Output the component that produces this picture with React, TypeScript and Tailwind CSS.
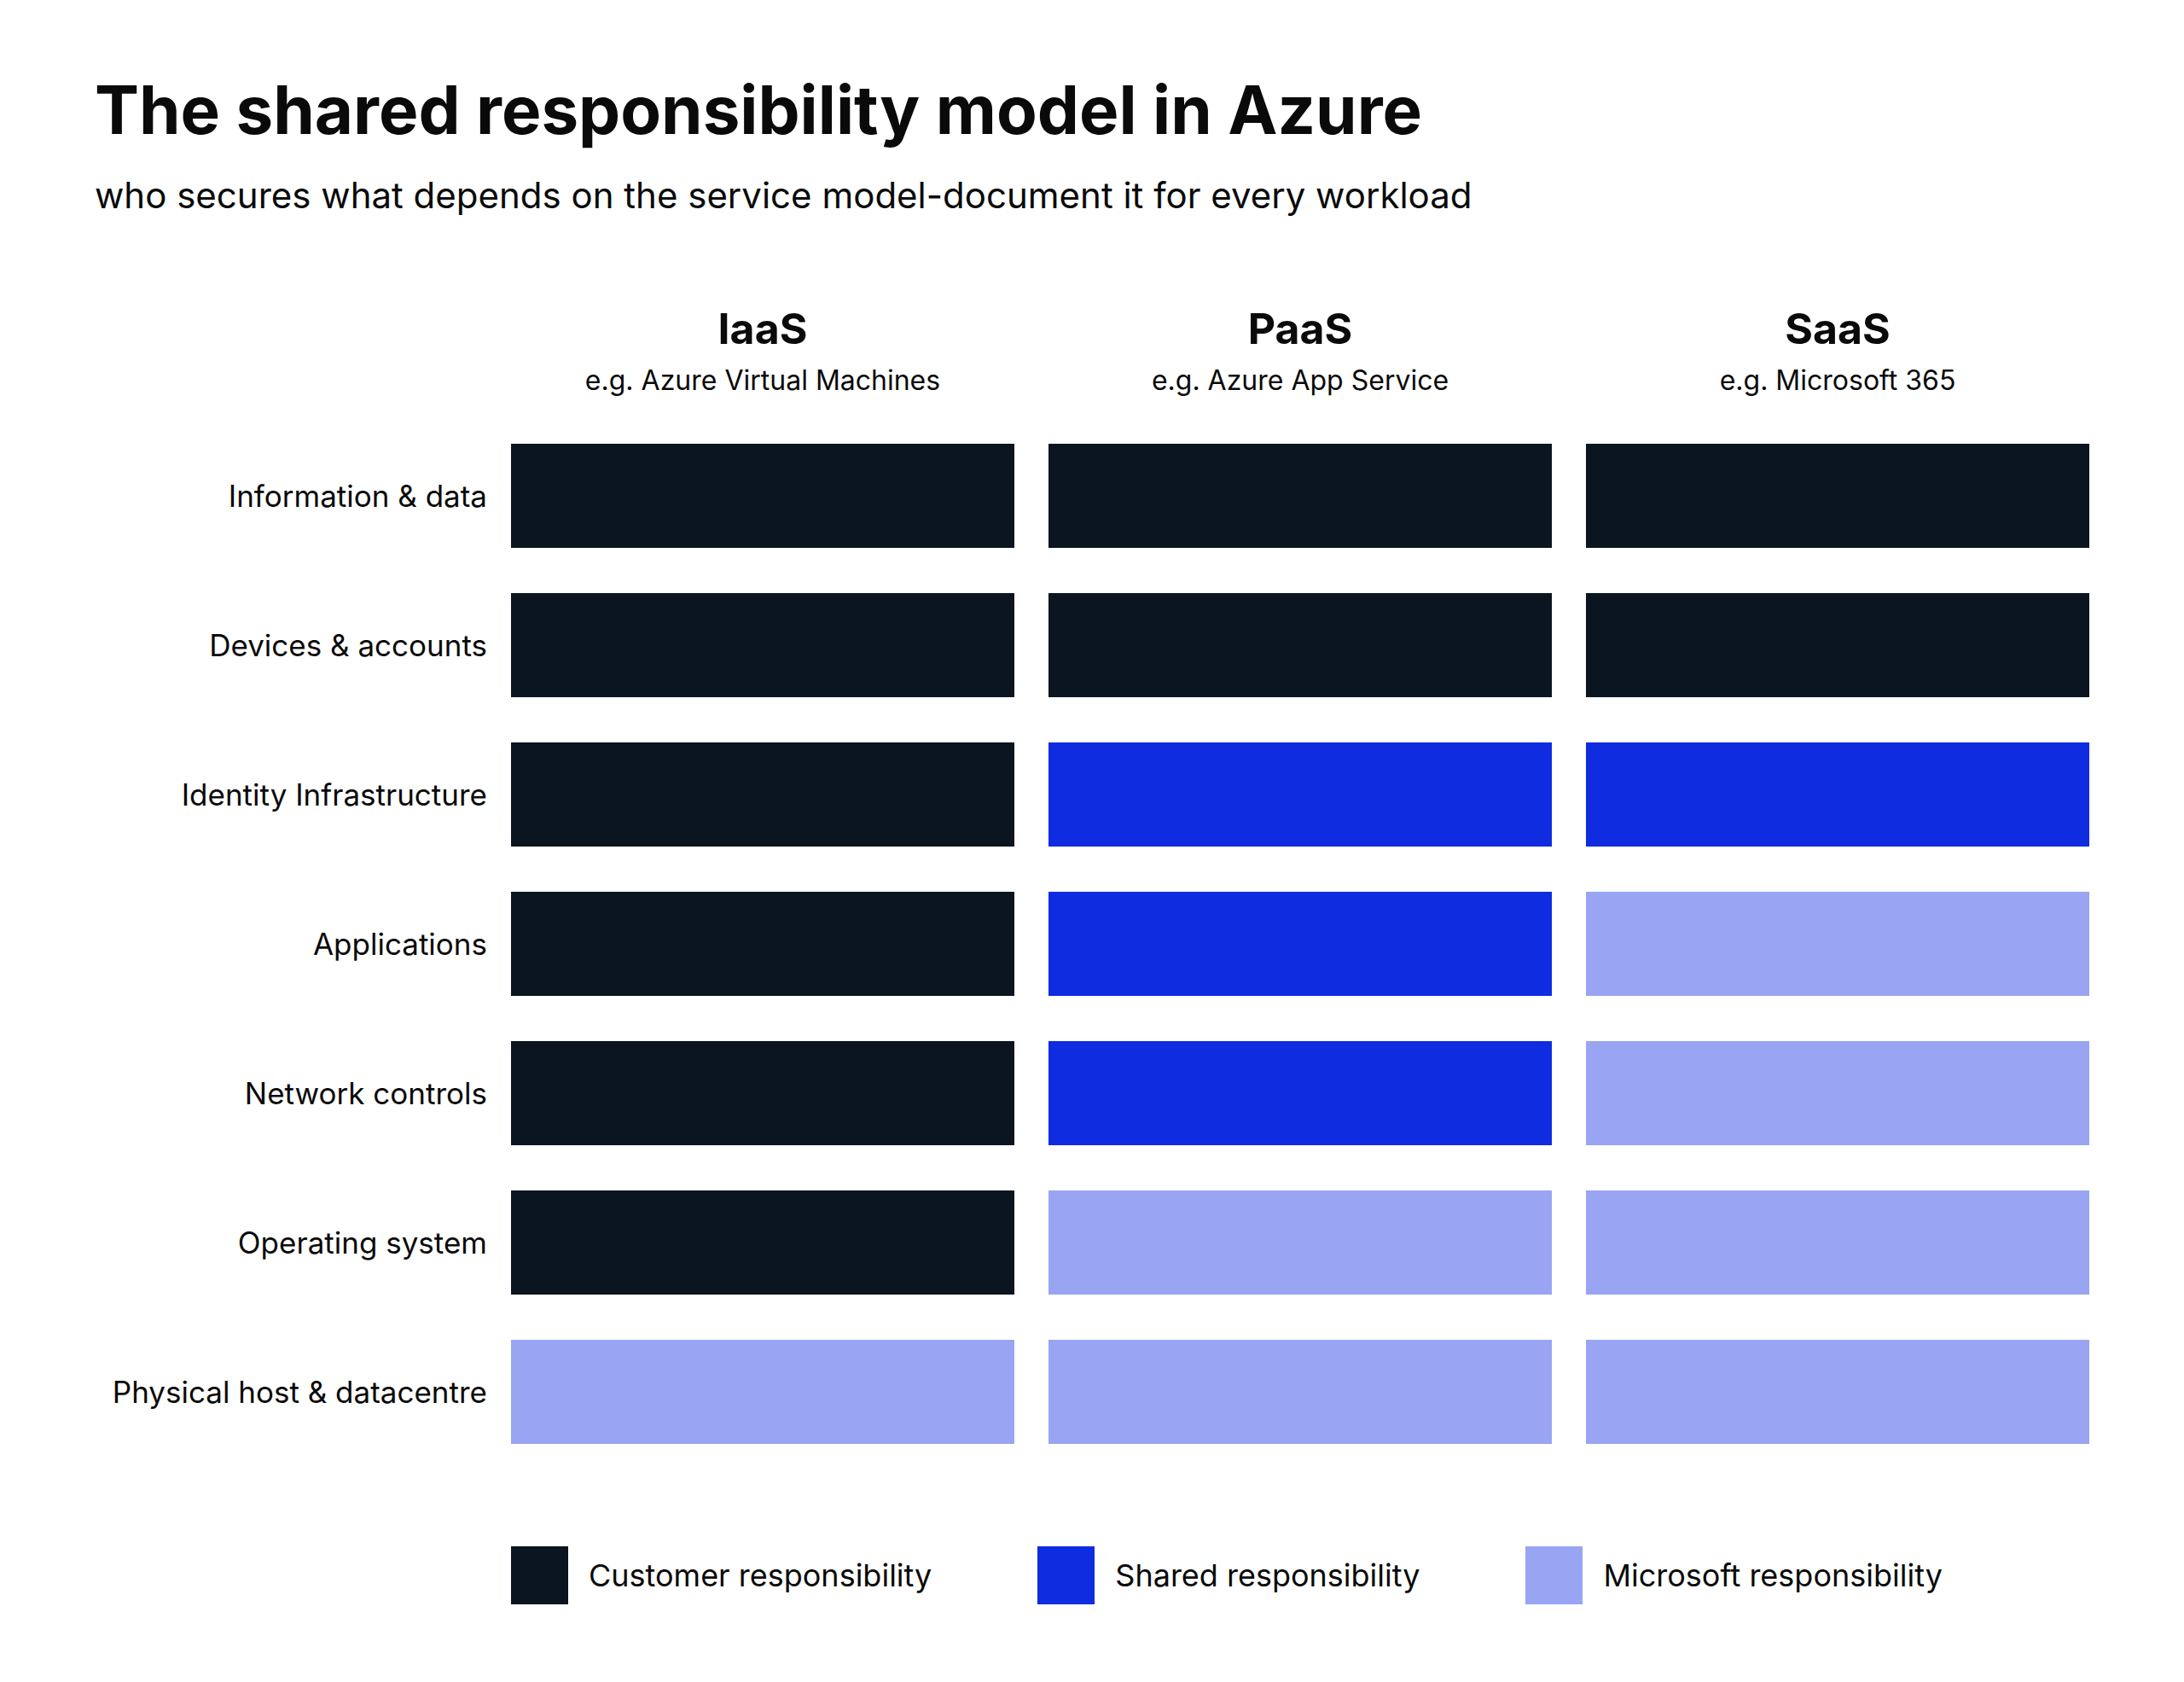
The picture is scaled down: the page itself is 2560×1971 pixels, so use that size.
import React from 'react';

type Level = 'customer' | 'shared' | 'microsoft';

const fills: Record<Level, string> = {
  customer: 'bg-[#0a1520]',
  shared: 'bg-[#102ce0]',
  microsoft: 'bg-[#99a5f2]',
};

const models = [
  { name: 'IaaS', example: 'e.g. Azure Virtual Machines' },
  { name: 'PaaS', example: 'e.g. Azure App Service' },
  { name: 'SaaS', example: 'e.g. Microsoft 365' },
];

const rows: { label: string; cells: Level[] }[] = [
  { label: 'Information & data', cells: ['customer', 'customer', 'customer'] },
  { label: 'Devices & accounts', cells: ['customer', 'customer', 'customer'] },
  { label: 'Identity Infrastructure', cells: ['customer', 'shared', 'shared'] },
  { label: 'Applications', cells: ['customer', 'shared', 'microsoft'] },
  { label: 'Network controls', cells: ['customer', 'shared', 'microsoft'] },
  { label: 'Operating system', cells: ['customer', 'microsoft', 'microsoft'] },
  { label: 'Physical host & datacentre', cells: ['microsoft', 'microsoft', 'microsoft'] },
];

const legend: { level: Level; text: string }[] = [
  { level: 'customer', text: 'Customer responsibility' },
  { level: 'shared', text: 'Shared responsibility' },
  { level: 'microsoft', text: 'Microsoft responsibility' },
];

const App: React.FC = () => {
  return (
    <div className="min-h-[1971px] w-[2560px] bg-white text-[#0a0a0a] font-['Inter',sans-serif] pl-[111px] pt-[90px]">
      <h1 className="text-[78px] font-bold leading-none">
        The shared responsibility model in Azure
      </h1>
      <p className="mt-[40px] text-[42px] leading-none">
        who secures what depends on the service model-document it for every workload
      </p>

      {/* column headers */}
      <div className="mt-[110px] flex">
        <div className="w-[460px] shrink-0" />
        <div className="ml-[28px] grid w-[1850px] grid-cols-3 gap-x-[40px]">
          {models.map((m) => (
            <div key={m.name} className="flex flex-col items-center">
              <div className="text-[50px] font-bold leading-none">{m.name}</div>
              <div className="mt-[20px] text-[32px] leading-none">{m.example}</div>
            </div>
          ))}
        </div>
      </div>

      {/* matrix */}
      <div className="mt-[58px] flex flex-col gap-[53px]">
        {rows.map((r) => (
          <div key={r.label} className="flex">
            <div className="flex w-[460px] shrink-0 items-center justify-end text-[35px]">
              {r.label}
            </div>
            <div className="ml-[28px] grid w-[1850px] grid-cols-3 gap-x-[40px]">
              {r.cells.map((c, i) => (
                <div key={i} className={`h-[122px] ${fills[c]}`} />
              ))}
            </div>
          </div>
        ))}
      </div>

      {/* legend */}
      <div className="mt-[120px] ml-[488px] flex items-center gap-[124px]">
        {legend.map((l) => (
          <div key={l.level} className="flex items-center gap-[24px]">
            <div className={`h-[68px] w-[67px] ${fills[l.level]}`} />
            <span className="text-[36px]">{l.text}</span>
          </div>
        ))}
      </div>
    </div>
  );
};

export default App;
